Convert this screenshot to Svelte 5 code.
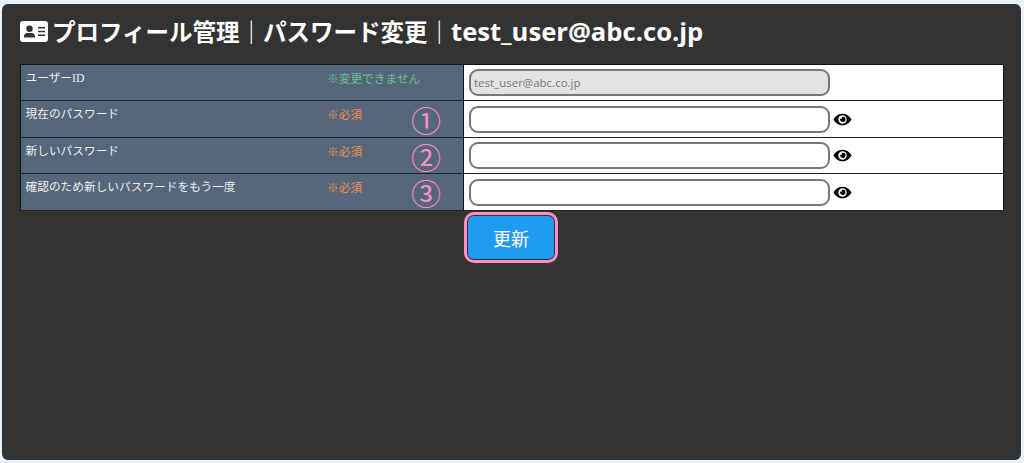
<script>
  const rows = [
    { label: 'ユーザーID', note: '※変更できません', kind: 'info', value: 'test_user@abc.co.jp', locked: true },
    { label: '現在のパスワード', note: '※必須', kind: 'req', mark: '①' },
    { label: '新しいパスワード', note: '※必須', kind: 'req', mark: '②' },
    { label: '確認のため新しいパスワードをもう一度', note: '※必須', kind: 'req', mark: '③' }
  ]
</script>

<div class="panel">
  <h1>
    <svg class="card-icon" viewBox="0 0 28 21" aria-hidden="true">
      <path fill="#fff" fill-rule="evenodd" d="M3 0h22a3 3 0 0 1 3 3v15a3 3 0 0 1-3 3H3a3 3 0 0 1-3-3V3a3 3 0 0 1 3-3zM9.500 4.500a3.200 3.200 0 1 0 0 6.400 3.200 3.200 0 0 0 0-6.400zM4 16.500h11v-1.300c0-1.900-1.500-3.200-3.200-3.200H7.200C5.500 12 4 13.300 4 15.200zM18 6v1.500h7V6zM18 9.700v1.500h7V9.700zM18 13.400v1.500h7v-1.500z"/>
    </svg>
    <span>プロフィール管理｜パスワード変更｜<span class="mail">test_user@abc.co.jp</span></span>
  </h1>

  <div class="table">
    {#each rows as row}
      <div class="row">
        <div class="head">
          <span class="label">{row.label}</span>
          <span class="note {row.kind}">{row.note}</span>
          {#if row.mark}
            <span class="mark">{row.mark}</span>
          {/if}
        </div>
        <div class="cell">
          <input class:locked={row.locked} value={row.value ?? ''} disabled={row.locked} />
          {#if !row.locked}
            <svg class="eye" viewBox="0 0 576 512" aria-hidden="true">
              <path d="M288 80C159 80 58 170 14 256c44 86 145 176 274 176s230-90 274-176C518 170 417 80 288 80zm0 304c-71 0-128-57-128-128s57-128 128-128 128 57 128 128-57 128-128 128zm0-208c-7 0-14 1-21 3 10 14 9 33-4 45-12 13-31 14-45 4-10 34 3 71 33 91s70 18 98-5 38-62 25-95-50-43-86-43z"/>
            </svg>
          {/if}
        </div>
      </div>
    {/each}
  </div>

  <div class="actions">
    <button>更新</button>
  </div>
</div>

<style>
  :global(body) {
    background: #e9f1fb;
  }

  .panel {
    box-sizing: border-box;
    width: 1019px;
    height: 456px;
    margin: 4px 0 0 2px;
    padding: 12px 18px 0;
    background: #333;
    border-radius: 6px;
    font-family: "Liberation Sans", "Noto Sans CJK JP", sans-serif;
  }

  h1 {
    display: flex;
    align-items: center;
    gap: 4px;
    height: 30px;
    margin: 0 0 18px;
    color: #fff;
    font-family: "Noto Sans CJK JP", sans-serif;
    font-size: 23.500px;
    line-height: 30px;
    font-weight: bold;
    white-space: nowrap;
  }

  .mail {
    font-family: "Open Sans", sans-serif;
    font-size: 25.600px;
  }

  .card-icon {
    width: 28px;
    height: 21px;
    flex-shrink: 0;
  }

  .table {
    width: 983px;
    border-top: 1px solid #111;
    border-left: 1px solid #111;
  }

  .row {
    display: grid;
    grid-template-columns: 443px 1fr;
    height: 36px;
    box-sizing: border-box;
    border-bottom: 1px solid #222;
    border-right: 1px solid #111;
  }

  .row:nth-child(even) {
    height: 37px;
  }

  .head {
    position: relative;
    display: flex;
    padding: 6px 0 0 4.500px;
    background: #56677c;
    border-right: 1px solid #111;
    color: #eee;
    font-size: 11.700px;
    line-height: 15px;
  }

  .label {
    width: 301.500px;
    flex-shrink: 0;
    font-family: "Liberation Serif", "Noto Sans CJK JP", serif;
  }

  .note.info {
    color: #6cc08f;
  }

  .note.req {
    color: #ee9050;
  }

  .mark {
    position: absolute;
    left: 390px;
    top: 4px;
    color: #ff8ec6;
    font-size: 30px;
    line-height: 34px;
  }

  .cell {
    display: flex;
    align-items: center;
    padding-left: 5px;
    background: #fff;
  }

  input {
    box-sizing: border-box;
    width: 361px;
    height: 27px;
    padding: 0 3px;
    background: #fff;
    border: 2px solid #777;
    border-radius: 9px;
    font-family: "Open Sans", "Liberation Sans", sans-serif;
    font-size: 11.500px;
    color: #777;
    outline: none;
  }

  input.locked {
    background: #e3e3e3;
  }

  .eye {
    width: 19px;
    height: 17px;
    margin-left: 3px;
  }

  .actions {
    display: flex;
    padding: 4px 0 0 447px;
  }

  button {
    box-sizing: border-box;
    width: 88px;
    height: 45px;
    background: #1f9cf0;
    border: 1px solid #333;
    outline: 3px solid #ff8ec6;
    outline-offset: 0;
    border-radius: 7px;
    color: #fff;
    font-family: "Noto Sans CJK JP", sans-serif;
    font-size: 18px;
  }
</style>
